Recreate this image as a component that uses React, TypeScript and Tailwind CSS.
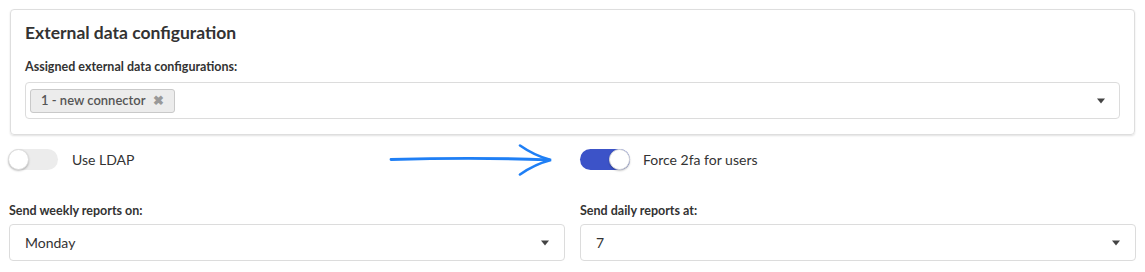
import React from 'react';

const Caret = () => (
  <svg width="10" height="6" viewBox="0 0 10 6" className="shrink-0">
    <path d="M1 0.5h8L5 5.5z" fill="#444" />
  </svg>
);

const Toggle = ({ on }: { on: boolean }) => (
  <div
    className={`relative w-[50px] h-[21px] rounded-full ${on ? 'bg-[#3c53c8]' : 'bg-[#ececec]'}`}
  >
    <div
      className={`absolute top-0 w-[21px] h-[21px] rounded-full bg-white border border-[#dcdcdc] shadow-[0_1px_2px_rgba(0,0,0,0.25)] ${on ? 'right-0' : 'left-0'}`}
    />
  </div>
);

const Select = ({ value }: { value: string }) => (
  <div className="h-[37px] border border-[#dcdcdc] rounded-[4px] flex items-center justify-between pl-[15px] pr-[14px] bg-white">
    <span className="text-[14px] text-[#333]">{value}</span>
    <Caret />
  </div>
);

const App: React.FC = () => {
  return (
    <div className="w-[1145px] h-[272px] bg-white pt-[9px] px-[9px] font-['Lato',sans-serif] text-[#333]">
      {/* External data card */}
      <div className="mx-[1px] border border-[#dedede] rounded-[4px] shadow-[0_1px_2px_rgba(0,0,0,0.12)] px-[14px] pt-[12px] pb-[15px]">
        <h2 className="text-[17.5px] font-bold text-[#333] leading-[22px]">External data configuration</h2>
        <div className="mt-[15px] text-[12.5px] font-bold leading-[16px]">Assigned external data configurations:</div>
        <div className="mt-[7px] h-[37px] border border-[#dcdcdc] rounded-[4px] flex items-center justify-between pl-[4px] pr-[13px]">
          <div className="h-[24px] flex items-center gap-[8px] px-[10px] bg-[#ececec] border border-[#c9c9c9] rounded-[3px] text-[13px] font-semibold text-[#555]">
            <span>1 - new connector</span>
            <span className="text-[#999] text-[13px] leading-none">✖</span>
          </div>
          <Caret />
        </div>
      </div>

      {/* Toggles */}
      <div className="mt-[14px] flex items-center h-[21px]">
        <div className="w-[571px] flex items-center">
          <div className="-ml-[1px]">
            <Toggle on={false} />
          </div>
          <span className="ml-[14px] text-[14px]">Use LDAP</span>
          <svg width="170" height="32" viewBox="0 0 170 32" className="ml-[255px]">
            <path d="M2 15.5 C50 14.2 110 14 160 15.8" stroke="#1f7ff5" strokeWidth="2.8" fill="none" strokeLinecap="round" />
            <path d="M131 1.5 Q146 12 162 16 Q146 20 131 30.5" stroke="#1f7ff5" strokeWidth="2.6" fill="none" strokeLinecap="round" />
          </svg>
        </div>
        <Toggle on={true} />
        <span className="ml-[13px] text-[14px]">Force 2fa for users</span>
      </div>

      {/* Report selects */}
      <div className="mt-[33px] grid grid-cols-2 gap-[15px]">
        <div>
          <div className="text-[12.5px] font-bold leading-[16px] mb-[5px]">Send weekly reports on:</div>
          <Select value="Monday" />
        </div>
        <div>
          <div className="text-[12.5px] font-bold leading-[16px] mb-[5px]">Send daily reports at:</div>
          <Select value="7" />
        </div>
      </div>
    </div>
  );
};

export default App;
